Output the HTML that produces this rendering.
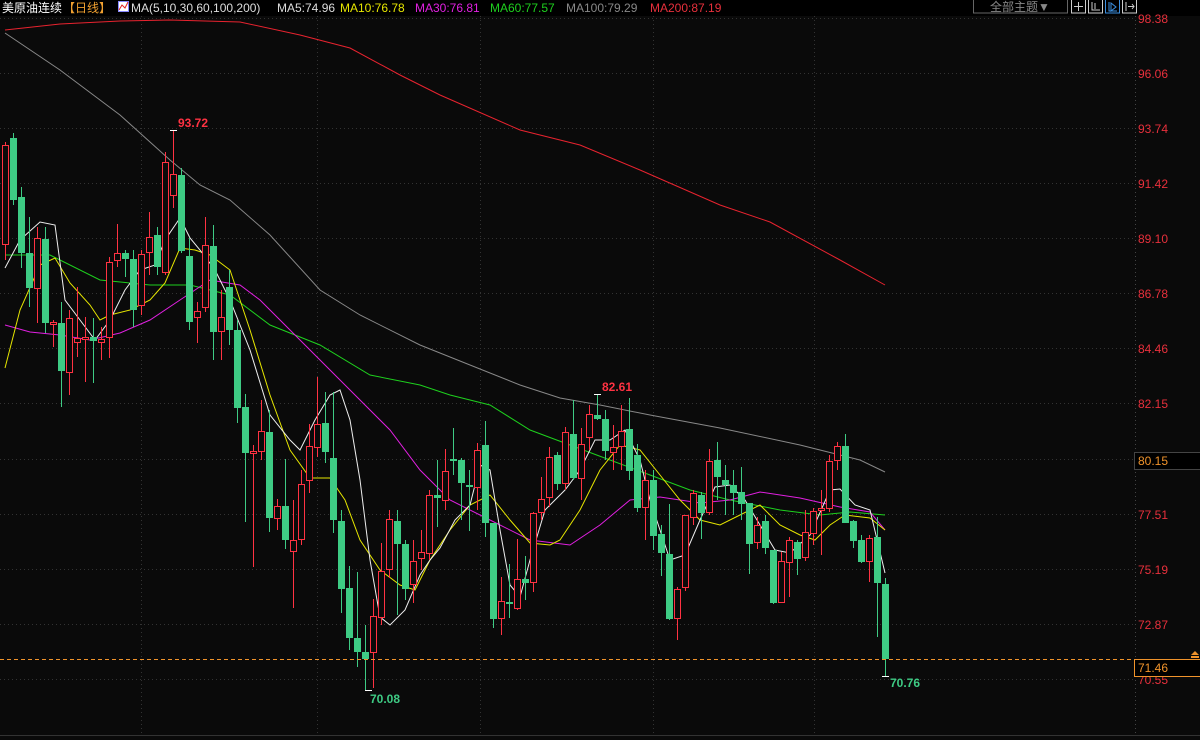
<!DOCTYPE html>
<html><head><meta charset="utf-8"><style>
body{margin:0;background:#0a0a0a;width:1200px;height:740px;overflow:hidden;font-family:"Liberation Sans","Noto Sans CJK SC",sans-serif}
svg{position:absolute;left:0;top:0}
</style></head><body>
<svg width="1200" height="740" viewBox="0 0 1200 740" xmlns="http://www.w3.org/2000/svg" font-family="Liberation Sans, Noto Sans CJK SC, sans-serif">
<rect width="1200" height="740" fill="#0a0a0a"/>
<rect width="1200" height="16" fill="#000"/>
<g stroke="#333" stroke-dasharray="1,3" stroke-width="1">
<line x1="0" x2="1135" y1="18.5" y2="18.5"/><line x1="0" x2="1135" y1="73.5" y2="73.5"/><line x1="0" x2="1135" y1="128.5" y2="128.5"/><line x1="0" x2="1135" y1="183.5" y2="183.5"/><line x1="0" x2="1135" y1="238.5" y2="238.5"/><line x1="0" x2="1135" y1="293.5" y2="293.5"/><line x1="0" x2="1135" y1="348.5" y2="348.5"/><line x1="0" x2="1135" y1="403.5" y2="403.5"/><line x1="0" x2="1135" y1="459.5" y2="459.5"/><line x1="0" x2="1135" y1="514.5" y2="514.5"/><line x1="0" x2="1135" y1="569.5" y2="569.5"/><line x1="0" x2="1135" y1="624.5" y2="624.5"/><line x1="0" x2="1135" y1="679.5" y2="679.5"/>
<line x1="141.5" x2="141.5" y1="16" y2="735"/><line x1="317.5" x2="317.5" y1="16" y2="735"/><line x1="480.5" x2="480.5" y1="16" y2="735"/><line x1="653.5" x2="653.5" y1="16" y2="735"/><line x1="814.5" x2="814.5" y1="16" y2="735"/>
<line x1="1135.5" x2="1135.5" y1="16" y2="735" stroke="#444"/>
</g>
<line x1="0" x2="1200" y1="735.5" y2="735.5" stroke="#333"/>
<!-- MAs -->
<g fill="none" stroke-width="1">
<polyline stroke="#e8232f" points="5,30 60,24 120,21 170,20 240,22 300,35 350,48 400,75 440,95 520,130 580,145 640,170 720,205 770,222 840,260 885,285"/>
<polyline stroke="#888" points="5,33 60,70 120,115 170,160 200,185 230,200 270,235 320,290 360,315 420,345 470,365 520,385 560,398 600,405 650,415 720,428 800,445 860,460 885,472"/>
<polyline stroke="#1ed01e" points="5,255 50,255 100,280 150,285 190,285 230,295 270,325 320,345 370,375 420,385 450,395 490,405 530,430 570,445 610,460 650,475 690,490 730,500 780,510 820,515 850,512 885,515"/>
<polyline stroke="#e020e0" points="5,325 30,332 60,335 90,340 120,333 150,320 180,300 210,280 240,285 260,300 290,330 330,370 360,400 390,430 420,470 450,500 490,520 530,540 570,545 600,525 630,500 660,497 700,503 730,500 760,492 800,498 840,507 870,512 885,530"/>
<polyline stroke="#e6e600" points="5,368 20,310 40,265 55,258 70,283 90,305 100,320 110,315 130,310 150,300 165,283 180,248 195,250 210,255 230,270 250,330 270,395 290,450 310,478 330,478 345,500 360,540 380,570 400,585 415,590 430,560 450,530 470,505 490,495 510,520 530,543 550,545 560,540 580,510 600,470 620,445 640,450 660,475 680,500 700,520 720,525 740,515 760,505 780,525 800,535 815,540 830,525 845,515 870,518 885,530"/>
<polyline stroke="#eee" points="5,268 20,240 40,222 55,225 65,300 80,320 95,340 110,320 125,290 140,270 155,265 165,240 180,218 190,238 200,250 215,270 230,300 250,350 270,415 290,440 300,450 315,420 330,395 340,390 350,420 360,480 370,560 380,617 390,625 405,610 420,575 430,560 440,548 455,520 470,505 480,465 490,470 500,530 510,585 520,597 530,560 545,510 565,490 580,470 595,440 610,440 625,430 640,460 650,500 660,530 670,560 685,555 700,520 715,487 730,485 745,500 760,525 775,550 790,553 810,535 830,490 840,489 855,505 870,510 885,573"/>
</g>
<!-- candles -->
<g id="c" stroke-width="1">
<g stroke="#ff3242" fill="#0a0a0a">
<line x1="5.5" x2="5.5" y1="142" y2="260"/><rect x="2.5" y="145.5" width="6" height="99"/>
<line x1="37.5" x2="37.5" y1="227" y2="323"/><rect x="34.5" y="238.5" width="6" height="50"/>
<line x1="53.5" x2="53.5" y1="320" y2="347"/><rect x="50.5" y="322.5" width="6" height="2"/>
<line x1="69.5" x2="69.5" y1="310" y2="395"/><rect x="66.5" y="318.5" width="6" height="54"/>
<line x1="77.5" x2="77.5" y1="287" y2="357"/><rect x="74.5" y="338.5" width="6" height="4"/>
<line x1="85.5" x2="85.5" y1="317" y2="382"/><rect x="82.5" y="337.5" width="6" height="2"/>
<line x1="101.5" x2="101.5" y1="327" y2="360"/><rect x="98.5" y="339.5" width="6" height="3"/>
<line x1="109.5" x2="109.5" y1="257" y2="358"/><rect x="106.5" y="262.5" width="6" height="75"/>
<line x1="117.5" x2="117.5" y1="224" y2="267"/><rect x="114.5" y="253.5" width="6" height="7"/>
<line x1="141.5" x2="141.5" y1="250" y2="315"/><rect x="138.5" y="254.5" width="6" height="51"/>
<line x1="149.5" x2="149.5" y1="212" y2="275"/><rect x="146.5" y="237.5" width="6" height="15"/>
<line x1="165.5" x2="165.5" y1="152" y2="275"/><rect x="162.5" y="162.5" width="6" height="110"/>
<line x1="173.5" x2="173.5" y1="130" y2="208"/><rect x="170.5" y="174.5" width="6" height="21"/>
<line x1="197.5" x2="197.5" y1="302" y2="343"/><rect x="194.5" y="311.5" width="6" height="6"/>
<line x1="205.5" x2="205.5" y1="217" y2="312"/><rect x="202.5" y="245.5" width="6" height="62"/>
<line x1="221.5" x2="221.5" y1="290" y2="360"/><rect x="218.5" y="317.5" width="6" height="14"/>
<line x1="253.5" x2="253.5" y1="445" y2="567"/><rect x="250.5" y="451.5" width="6" height="2"/>
<line x1="261.5" x2="261.5" y1="400" y2="460"/><rect x="258.5" y="431.5" width="6" height="20"/>
<line x1="277.5" x2="277.5" y1="499" y2="530"/><rect x="274.5" y="506.5" width="6" height="12"/>
<line x1="293.5" x2="293.5" y1="500" y2="608"/><rect x="290.5" y="540.5" width="6" height="11"/>
<line x1="301.5" x2="301.5" y1="470" y2="545"/><rect x="298.5" y="484.5" width="6" height="55"/>
<line x1="309.5" x2="309.5" y1="424" y2="493"/><rect x="306.5" y="446.5" width="6" height="34"/>
<line x1="317.5" x2="317.5" y1="377" y2="457"/><rect x="314.5" y="424.5" width="6" height="23"/>
<line x1="373.5" x2="373.5" y1="599" y2="688"/><rect x="370.5" y="616.5" width="6" height="36"/>
<line x1="381.5" x2="381.5" y1="543" y2="625"/><rect x="378.5" y="571.5" width="6" height="46"/>
<line x1="389.5" x2="389.5" y1="510" y2="578"/><rect x="386.5" y="519.5" width="6" height="50"/>
<line x1="413.5" x2="413.5" y1="540" y2="603"/><rect x="410.5" y="561.5" width="6" height="23"/>
<line x1="421.5" x2="421.5" y1="530" y2="570"/><rect x="418.5" y="552.5" width="6" height="6"/>
<line x1="429.5" x2="429.5" y1="490" y2="560"/><rect x="426.5" y="495.5" width="6" height="58"/>
<line x1="445.5" x2="445.5" y1="449" y2="510"/><rect x="442.5" y="471.5" width="6" height="29"/>
<line x1="477.5" x2="477.5" y1="443" y2="510"/><rect x="474.5" y="450.5" width="6" height="37"/>
<line x1="501.5" x2="501.5" y1="577" y2="635"/><rect x="498.5" y="601.5" width="6" height="17"/>
<line x1="517.5" x2="517.5" y1="539" y2="610"/><rect x="514.5" y="579.5" width="6" height="29"/>
<line x1="533.5" x2="533.5" y1="512" y2="592"/><rect x="530.5" y="513.5" width="6" height="69"/>
<line x1="541.5" x2="541.5" y1="477" y2="520"/><rect x="538.5" y="499.5" width="6" height="13"/>
<line x1="549.5" x2="549.5" y1="447" y2="507"/><rect x="546.5" y="457.5" width="6" height="40"/>
<line x1="565.5" x2="565.5" y1="427" y2="490"/><rect x="562.5" y="432.5" width="6" height="51"/>
<line x1="581.5" x2="581.5" y1="428" y2="500"/><rect x="578.5" y="444.5" width="6" height="34"/>
<line x1="589.5" x2="589.5" y1="405" y2="450"/><rect x="586.5" y="414.5" width="6" height="23"/>
<line x1="613.5" x2="613.5" y1="425" y2="470"/><rect x="610.5" y="447.5" width="6" height="5"/>
<line x1="621.5" x2="621.5" y1="405" y2="470"/><rect x="618.5" y="431.5" width="6" height="15"/>
<line x1="645.5" x2="645.5" y1="470" y2="540"/><rect x="642.5" y="480.5" width="6" height="27"/>
<line x1="677.5" x2="677.5" y1="587" y2="640"/><rect x="674.5" y="589.5" width="6" height="29"/>
<line x1="685.5" x2="685.5" y1="515" y2="591"/><rect x="682.5" y="515.5" width="6" height="72"/>
<line x1="693.5" x2="693.5" y1="490" y2="525"/><rect x="690.5" y="493.5" width="6" height="24"/>
<line x1="709.5" x2="709.5" y1="449" y2="515"/><rect x="706.5" y="461.5" width="6" height="51"/>
<line x1="757.5" x2="757.5" y1="517" y2="549"/><rect x="754.5" y="525.5" width="6" height="17"/>
<line x1="781.5" x2="781.5" y1="552" y2="603"/><rect x="778.5" y="561.5" width="6" height="41"/>
<line x1="789.5" x2="789.5" y1="537" y2="597"/><rect x="786.5" y="540.5" width="6" height="22"/>
<line x1="805.5" x2="805.5" y1="510" y2="561"/><rect x="802.5" y="532.5" width="6" height="25"/>
<line x1="813.5" x2="813.5" y1="508" y2="545"/><rect x="810.5" y="511.5" width="6" height="22"/>
<line x1="821.5" x2="821.5" y1="490" y2="555"/><rect x="818.5" y="508.5" width="6" height="2"/>
<line x1="829.5" x2="829.5" y1="455" y2="512"/><rect x="826.5" y="461.5" width="6" height="47"/>
<line x1="837.5" x2="837.5" y1="442" y2="470"/><rect x="834.5" y="446.5" width="6" height="14"/>
<line x1="869.5" x2="869.5" y1="535" y2="582"/><rect x="866.5" y="538.5" width="6" height="23"/>
</g>
<g stroke="#3ecb84" fill="#3ecb84">
<line x1="13.5" x2="13.5" y1="133" y2="205"/><rect x="10" y="138" width="7" height="62" stroke="none"/>
<line x1="21.5" x2="21.5" y1="187" y2="268"/><rect x="18" y="197" width="7" height="56" stroke="none"/>
<line x1="29.5" x2="29.5" y1="217" y2="307"/><rect x="26" y="253" width="7" height="35" stroke="none"/>
<line x1="45.5" x2="45.5" y1="227" y2="333"/><rect x="42" y="239" width="7" height="84" stroke="none"/>
<line x1="61.5" x2="61.5" y1="302" y2="407"/><rect x="58" y="323" width="7" height="48" stroke="none"/>
<line x1="93.5" x2="93.5" y1="318" y2="383"/><rect x="90" y="337" width="7" height="4" stroke="none"/>
<line x1="125.5" x2="125.5" y1="250" y2="277"/><rect x="122" y="253" width="7" height="6" stroke="none"/>
<line x1="133.5" x2="133.5" y1="250" y2="327"/><rect x="130" y="259" width="7" height="51" stroke="none"/>
<line x1="157.5" x2="157.5" y1="227" y2="275"/><rect x="154" y="235" width="7" height="32" stroke="none"/>
<line x1="181.5" x2="181.5" y1="168" y2="253"/><rect x="178" y="175" width="7" height="76" stroke="none"/>
<line x1="189.5" x2="189.5" y1="238" y2="330"/><rect x="186" y="256" width="7" height="66" stroke="none"/>
<line x1="213.5" x2="213.5" y1="225" y2="360"/><rect x="210" y="246" width="7" height="86" stroke="none"/>
<line x1="229.5" x2="229.5" y1="270" y2="345"/><rect x="226" y="287" width="7" height="43" stroke="none"/>
<line x1="237.5" x2="237.5" y1="320" y2="423"/><rect x="234" y="330" width="7" height="78" stroke="none"/>
<line x1="245.5" x2="245.5" y1="394" y2="522"/><rect x="242" y="407" width="7" height="46" stroke="none"/>
<line x1="269.5" x2="269.5" y1="410" y2="532"/><rect x="266" y="432" width="7" height="86" stroke="none"/>
<line x1="285.5" x2="285.5" y1="459" y2="549"/><rect x="282" y="506" width="7" height="34" stroke="none"/>
<line x1="325.5" x2="325.5" y1="392" y2="463"/><rect x="322" y="423" width="7" height="29" stroke="none"/>
<line x1="333.5" x2="333.5" y1="392" y2="533"/><rect x="330" y="458" width="7" height="62" stroke="none"/>
<line x1="341.5" x2="341.5" y1="510" y2="613"/><rect x="338" y="521" width="7" height="68" stroke="none"/>
<line x1="349.5" x2="349.5" y1="566" y2="650"/><rect x="346" y="588" width="7" height="50" stroke="none"/>
<line x1="357.5" x2="357.5" y1="572" y2="667"/><rect x="354" y="638" width="7" height="14" stroke="none"/>
<line x1="365.5" x2="365.5" y1="625" y2="690"/><rect x="362" y="652" width="7" height="7" stroke="none"/>
<line x1="397.5" x2="397.5" y1="510" y2="615"/><rect x="394" y="521" width="7" height="23" stroke="none"/>
<line x1="405.5" x2="405.5" y1="540" y2="600"/><rect x="402" y="544" width="7" height="45" stroke="none"/>
<line x1="437.5" x2="437.5" y1="460" y2="527"/><rect x="434" y="495" width="7" height="3" stroke="none"/>
<line x1="453.5" x2="453.5" y1="428" y2="475"/><rect x="450" y="459" width="7" height="2" stroke="none"/>
<line x1="461.5" x2="461.5" y1="458" y2="520"/><rect x="458" y="460" width="7" height="23" stroke="none"/>
<line x1="469.5" x2="469.5" y1="470" y2="531"/><rect x="466" y="485" width="7" height="2" stroke="none"/>
<line x1="485.5" x2="485.5" y1="421" y2="537"/><rect x="482" y="445" width="7" height="78" stroke="none"/>
<line x1="493.5" x2="493.5" y1="523" y2="628"/><rect x="490" y="523" width="7" height="96" stroke="none"/>
<line x1="509.5" x2="509.5" y1="564" y2="618"/><rect x="506" y="602" width="7" height="2" stroke="none"/>
<line x1="525.5" x2="525.5" y1="556" y2="600"/><rect x="522" y="579" width="7" height="4" stroke="none"/>
<line x1="557.5" x2="557.5" y1="452" y2="490"/><rect x="554" y="455" width="7" height="29" stroke="none"/>
<line x1="573.5" x2="573.5" y1="400" y2="480"/><rect x="570" y="434" width="7" height="44" stroke="none"/>
<line x1="597.5" x2="597.5" y1="394" y2="420"/><rect x="594" y="415" width="7" height="4" stroke="none"/>
<line x1="605.5" x2="605.5" y1="410" y2="460"/><rect x="602" y="419" width="7" height="32" stroke="none"/>
<line x1="629.5" x2="629.5" y1="398" y2="480"/><rect x="626" y="429" width="7" height="42" stroke="none"/>
<line x1="637.5" x2="637.5" y1="444" y2="512"/><rect x="634" y="455" width="7" height="53" stroke="none"/>
<line x1="653.5" x2="653.5" y1="470" y2="550"/><rect x="650" y="480" width="7" height="56" stroke="none"/>
<line x1="661.5" x2="661.5" y1="525" y2="576"/><rect x="658" y="534" width="7" height="19" stroke="none"/>
<line x1="669.5" x2="669.5" y1="504" y2="620"/><rect x="666" y="554" width="7" height="65" stroke="none"/>
<line x1="701.5" x2="701.5" y1="492" y2="539"/><rect x="698" y="495" width="7" height="18" stroke="none"/>
<line x1="717.5" x2="717.5" y1="442" y2="500"/><rect x="714" y="460" width="7" height="17" stroke="none"/>
<line x1="725.5" x2="725.5" y1="465" y2="515"/><rect x="722" y="480" width="7" height="5" stroke="none"/>
<line x1="733.5" x2="733.5" y1="470" y2="515"/><rect x="730" y="485" width="7" height="8" stroke="none"/>
<line x1="741.5" x2="741.5" y1="467" y2="520"/><rect x="738" y="492" width="7" height="12" stroke="none"/>
<line x1="749.5" x2="749.5" y1="503" y2="574"/><rect x="746" y="503" width="7" height="41" stroke="none"/>
<line x1="765.5" x2="765.5" y1="515" y2="554"/><rect x="762" y="521" width="7" height="27" stroke="none"/>
<line x1="773.5" x2="773.5" y1="550" y2="604"/><rect x="770" y="550" width="7" height="53" stroke="none"/>
<line x1="797.5" x2="797.5" y1="540" y2="575"/><rect x="794" y="542" width="7" height="17" stroke="none"/>
<line x1="845.5" x2="845.5" y1="434" y2="523"/><rect x="842" y="446" width="7" height="77" stroke="none"/>
<line x1="853.5" x2="853.5" y1="520" y2="548"/><rect x="850" y="521" width="7" height="20" stroke="none"/>
<line x1="861.5" x2="861.5" y1="535" y2="563"/><rect x="858" y="540" width="7" height="22" stroke="none"/>
<line x1="877.5" x2="877.5" y1="517" y2="637"/><rect x="874" y="537" width="7" height="46" stroke="none"/>
<line x1="885.5" x2="885.5" y1="578" y2="676"/><rect x="882" y="584" width="7" height="75" stroke="none"/>
</g>
</g>
<!-- extremes -->
<g stroke="#fff" stroke-width="1">
<line x1="170" x2="177" y1="130.5" y2="130.5"/><line x1="365" x2="372" y1="690.5" y2="690.5"/>
<line x1="594" x2="601" y1="394.5" y2="394.5"/><line x1="882" x2="889" y1="676.5" y2="676.5"/>
</g>
<g font-size="12" font-weight="bold">
<text x="178" y="127" fill="#ff3242">93.72</text>
<text x="602" y="391" fill="#ff3242">82.61</text>
<text x="370" y="703" fill="#3ecb84">70.08</text>
<text x="890" y="687" fill="#3ecb84">70.76</text>
</g>
<!-- current price line -->
<line x1="0" x2="1135" y1="659.5" y2="659.5" stroke="#f0932b" stroke-dasharray="4,3"/>
<!-- axis labels -->
<g font-size="12" fill="#e8303c">
<text x="1138" y="23">98.38</text><text x="1138" y="78">96.06</text><text x="1138" y="133">93.74</text><text x="1138" y="188">91.42</text><text x="1138" y="243">89.10</text><text x="1138" y="298">86.78</text><text x="1138" y="353">84.46</text><text x="1138" y="408">82.15</text><text x="1138" y="519">77.51</text><text x="1138" y="574">75.19</text><text x="1138" y="629">72.87</text><text x="1138" y="684">70.55</text>
</g>
<rect x="1134.5" y="452.5" width="70" height="17" fill="#000" stroke="#444"/>
<text x="1138" y="465" font-size="12" fill="#f0932b">80.15</text>
<rect x="1134.5" y="659.5" width="70" height="17" fill="#000" stroke="#f0932b"/>
<text x="1138" y="672" font-size="12" fill="#f0932b">71.46</text>
<path d="M1195 651 l-4 4 h8 z M1191 656 h8 v2 h-8z" fill="#f0932b"/>
<!-- top bar -->
<text x="2" y="12" font-size="12" fill="#fff">美原油连续</text>
<text x="63" y="12" font-size="12" fill="#f0a030">【日线】</text>
<rect x="118.5" y="1.5" width="10" height="10" fill="#fff" stroke="#88f"/>
<polyline points="119,10 122,5 125,8 128,2" fill="none" stroke="#e02020"/>
<g font-size="12">
<text x="131" y="12" fill="#ddd">MA(5,10,30,60,100,200)</text>
<text x="277" y="12" fill="#ddd">MA5:74.96</text>
<text x="340" y="12" fill="#e6e600">MA10:76.78</text>
<text x="415" y="12" fill="#e020e0">MA30:76.81</text>
<text x="490" y="12" fill="#1ed01e">MA60:77.57</text>
<text x="566" y="12" fill="#888">MA100:79.29</text>
<text x="650" y="12" fill="#e8303c">MA200:87.19</text>
</g>
<rect x="973.5" y="-1" width="94" height="14" fill="#000" stroke="#666"/>
<text x="990" y="11" font-size="12" fill="#888">全部主题▼</text>
<g fill="none" stroke="#ccc">
<rect x="1071.5" y="-1" width="14" height="14"/><path d="M1078.5 2v9M1074 6.5h9"/>
<rect x="1088.5" y="-1" width="14" height="14"/><path d="M1092 2v8h8M1095 3v6"/>
<rect x="1105.5" y="-1" width="14" height="14" stroke="#3b8fe0"/><path d="M1109 2v9h8M1111 3l5 4-5 4z" stroke="#3b8fe0"/>
<rect x="1122.5" y="-1" width="14" height="14"/><path d="M1126 2v9M1128 6.5h6M1132 4l2 2.5-2 2.5"/>
</g>
</svg>
</body></html>
